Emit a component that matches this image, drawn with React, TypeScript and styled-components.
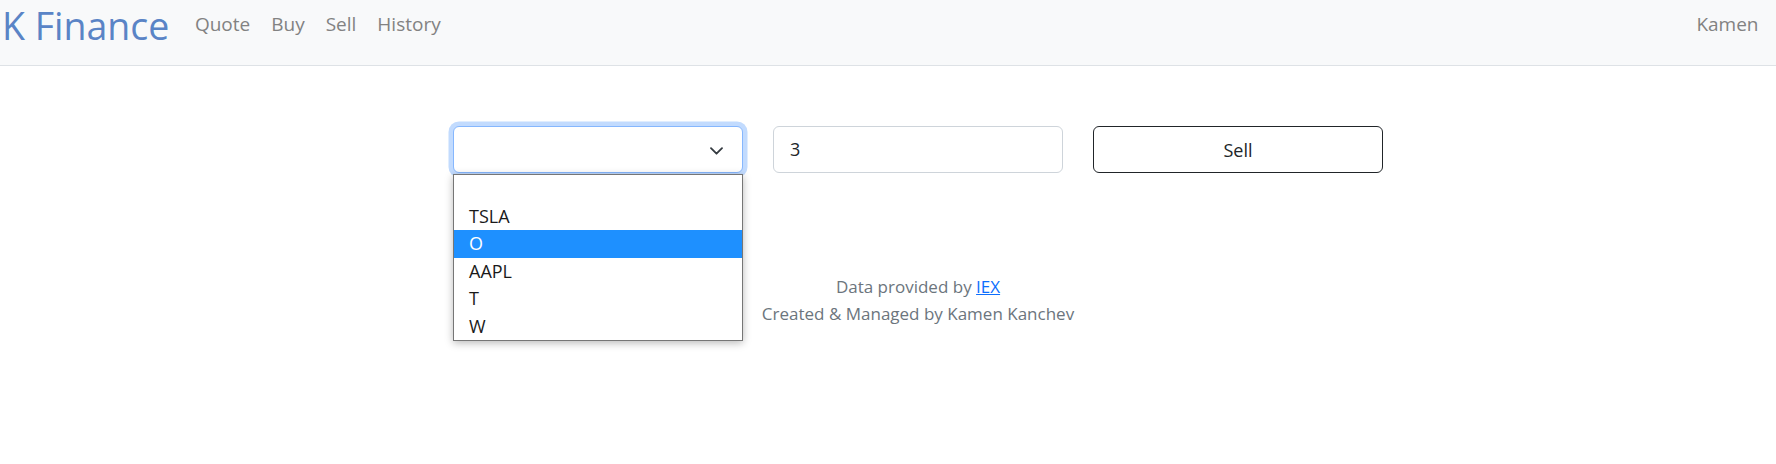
import React from "react";
import styled, { createGlobalStyle } from "styled-components";

const GlobalStyle = createGlobalStyle`
  html, body { margin: 0; padding: 0; background: #fff; }
  body {
    font-family: "Open Sans", "Noto Sans", "Liberation Sans", sans-serif;
    font-size: 18px;
    line-height: 1.5;
    color: #212529;
  }
  * { box-sizing: border-box; }
`;

const NavBar = styled.nav`
  height: 66px;
  background: #f8f9fa;
  border-bottom: 1px solid #dee2e6;
  display: flex;
  align-items: flex-start;
  padding: 0 7px 0 0;
`;

const Brand = styled.a`
  font-size: 37.5px;
  line-height: 52px;
  color: #5a84c6;
  margin: 0 15px 0 2px;
  text-decoration: none;
`;

const NavList = styled.div`
  display: flex;
  align-items: center;
  flex: 1;
  padding-top: 10px;
`;

const NavLink = styled.a<{ $right?: boolean }>`
  font-size: 19px;
  line-height: 28px;
  color: #828282;
  padding: 0 10.5px;
  text-decoration: none;
  margin-left: ${(p) => (p.$right ? "auto" : "0")};
`;

const Main = styled.main`
  padding: 60px 0 140px 60px;
`;

const FormRow = styled.form`
  display: flex;
  justify-content: center;
  gap: 30px;
`;

const SelectWrap = styled.div`
  position: relative;
  width: 290px;
`;

const SelectBox = styled.div`
  height: 47px;
  border: 1px solid #86b7fe;
  border-radius: 6px;
  box-shadow: 0 0 0 4.5px rgba(13, 110, 253, 0.25);
  background: #fff;
  display: flex;
  align-items: center;
  justify-content: flex-end;
  padding-right: 19px;
`;

const Chevron = styled.svg`
  width: 13px;
  height: 8px;
  margin-top: 2px;
`;

const OptionList = styled.ul`
  position: absolute;
  top: calc(100% + 1px);
  left: 0;
  width: 290px;
  margin: 0;
  padding: 0;
  list-style: none;
  background: #fff;
  border: 1px solid #767676;
  box-shadow: 0 2px 8px rgba(0, 0, 0, 0.28);
  z-index: 10;
`;

const OptionItem = styled.li<{ $active?: boolean }>`
  height: 27.5px;
  line-height: 27.5px;
  padding-left: 15px;
  font-size: 18px;
  color: ${(p) => (p.$active ? "#fff" : "#1a1a1a")};
  background: ${(p) => (p.$active ? "#1e90ff" : "transparent")};
`;

const TextInput = styled.div`
  width: 290px;
  height: 47px;
  border: 1px solid #ced4da;
  border-radius: 6px;
  padding-left: 16px;
  display: flex;
  align-items: center;
  font-size: 18px;
  color: #212529;
`;

const SellButton = styled.button`
  width: 290px;
  height: 47px;
  border: 1px solid #212529;
  border-radius: 6px;
  background: #fff;
  font-family: inherit;
  font-size: 18px;
  color: #212529;
`;

const Footer = styled.footer`
  margin-top: 100px;
  text-align: center;
  color: #6c757d;
  font-size: 17px;
  line-height: 27px;
`;

const FooterLink = styled.a`
  color: #0d6efd;
  text-decoration: underline;
`;

const options = ["", "TSLA", "O", "AAPL", "T", "W"];

export default function App() {
  return (
    <>
      <GlobalStyle />
      <NavBar>
        <Brand href="#">K Finance</Brand>
        <NavList>
          <NavLink href="#">Quote</NavLink>
          <NavLink href="#">Buy</NavLink>
          <NavLink href="#">Sell</NavLink>
          <NavLink href="#">History</NavLink>
          <NavLink href="#" $right>
            Kamen
          </NavLink>
        </NavList>
      </NavBar>
      <Main>
        <FormRow onSubmit={(e) => e.preventDefault()}>
          <SelectWrap>
            <SelectBox>
              <Chevron viewBox="0 0 13 8">
                <path d="M1 1.2l5.5 5.5L12 1.2" fill="none" stroke="#343a40" strokeWidth="1.8" strokeLinecap="round" strokeLinejoin="round" />
              </Chevron>
            </SelectBox>
            <OptionList>
              {options.map((o, i) => (
                <OptionItem key={i} $active={o === "O"}>
                  {o}
                </OptionItem>
              ))}
            </OptionList>
          </SelectWrap>
          <TextInput>3</TextInput>
          <SellButton type="submit">Sell</SellButton>
        </FormRow>
        <Footer>
          <div>
            Data provided by <FooterLink href="#">IEX</FooterLink>
          </div>
          <div>Created &amp; Managed by Kamen Kanchev</div>
        </Footer>
      </Main>
    </>
  );
}
